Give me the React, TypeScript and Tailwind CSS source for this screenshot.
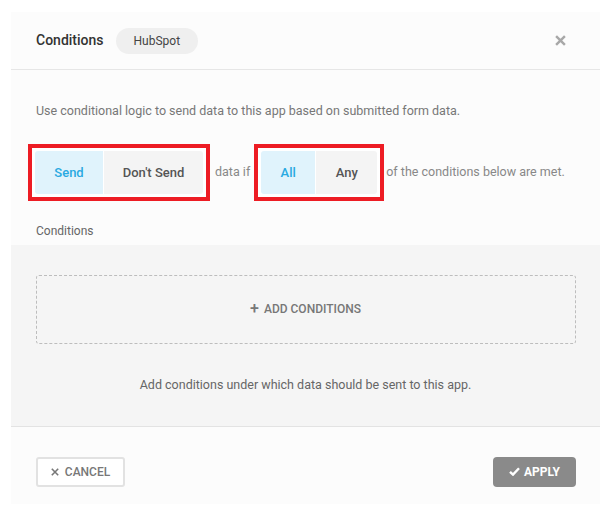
import React from 'react'

const Check = () => (
  <svg width="11" height="9" viewBox="0 0 11 9" className="mr-[4px]">
    <path d="M1 4.8 L4 7.6 L10 1.2" fill="none" stroke="currentColor" strokeWidth="2.4" />
  </svg>
)

const Cross = ({ size = 9, w = 2 }: { size?: number; w?: number }) => (
  <svg width={size} height={size} viewBox="0 0 10 10">
    <path d="M1 1 L9 9 M9 1 L1 9" fill="none" stroke="currentColor" strokeWidth={w} />
  </svg>
)

function Toggle({ options, widths }: { options: string[]; widths: string[] }) {
  return (
    <div className="border-4 border-[#ed1c24] bg-white p-[3px]">
      <div className="flex h-[43px] gap-px overflow-hidden rounded-[3px]">
        {options.map((o, i) => (
          <div
            key={o}
            className={`flex items-center justify-center text-[13px] font-medium ${widths[i]} ${
              i === 0 ? 'bg-[#e0f3fc] text-[#29a9e1]' : 'bg-[#f4f4f4] text-[#555]'
            }`}
          >
            {o}
          </div>
        ))}
      </div>
    </div>
  )
}

export default function App() {
  return (
    <div className="min-h-[516px] bg-white pt-[12px] pl-[11px] font-['Roboto',sans-serif]">
      <div className="flex h-[492px] w-[589px] flex-col bg-[#fcfcfc]">
        <div className="flex h-[58px] items-center border-b border-[#e6e6e6] pl-[25px] pr-[34px]">
          <h1 className="text-[14px] font-medium text-[#333]">Conditions</h1>
          <span className="ml-[12px] flex h-[26px] items-center rounded-full bg-[#efefef] px-[18px] text-[12px] text-[#444]">
            HubSpot
          </span>
          <button className="ml-auto text-[#a8a8a8]">
            <Cross size={11} w={2.2} />
          </button>
        </div>

        <p className="mt-[32px] pl-[25px] text-[12.5px] text-[#777]">
          Use conditional logic to send data to this app based on submitted form data.
        </p>

        <div className="mt-[23px] flex items-center pl-[17px] text-[12.5px] text-[#888]">
          <Toggle options={['Send', "Don't Send"]} widths={['w-[68px]', 'w-[99px]']} />
          <span className="ml-[5px] mr-[4px]">data if</span>
          <Toggle options={['All', 'Any']} widths={['w-[54px]', 'w-[61px]']} />
          <span className="ml-[2px]">of the conditions below are met.</span>
        </div>

        <div className="mt-[21px] pl-[25px] text-[12px] text-[#666]">Conditions</div>

        <div className="mt-[5px] flex h-[182px] flex-col items-center border-b border-[#e3e3e3] bg-[#f5f5f5] pt-[30px]">
          <button className="flex h-[69px] w-[540px] items-center justify-center rounded-[3px] border border-dashed border-[#bdbdbd] text-[12px] font-medium text-[#777]">
            <span className="mr-[5px] text-[16px] leading-none">+</span>
            ADD CONDITIONS
          </button>
          <p className="mt-[32px] text-[12.5px] text-[#666]">
            Add conditions under which data should be sent to this app.
          </p>
        </div>

        <div className="flex flex-1 items-start justify-between pl-[25px] pr-[24px] pt-[30px]">
          <button className="flex h-[30px] w-[89px] items-center justify-center gap-[6px] rounded-[3px] border-2 border-[#e2e2e2] bg-white text-[12px] font-medium text-[#777]">
            <Cross size={8} w={2} />
            CANCEL
          </button>
          <button className="flex h-[30px] w-[83px] items-center justify-center rounded-[4px] bg-[#8a8a8a] text-[12px] font-bold text-white">
            <Check />
            APPLY
          </button>
        </div>
      </div>
    </div>
  )
}
